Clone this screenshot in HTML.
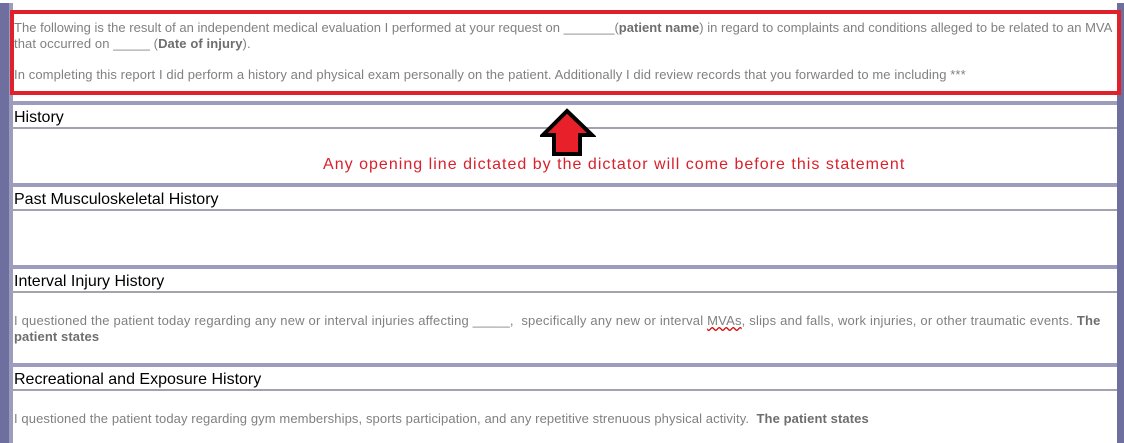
<!DOCTYPE html>
<html><head><meta charset="utf-8"><style>
body{margin:0;width:1124px;height:443px;background:#fff;position:relative;overflow:hidden;font-family:"Liberation Sans",sans-serif}
.a{position:absolute}
.band{position:absolute;left:10px;width:1107px;height:4px;background:#9c9cbf}
.ul{position:absolute;left:10px;width:1107px;height:2px;background:#a3a3b0}
.h{position:absolute;left:14px;font-size:16px;color:#000;white-space:nowrap}
.t{position:absolute;left:14px;font-size:13px;letter-spacing:0.1px;color:#808080;white-space:nowrap}
.t b{color:#6e6e6e}
</style></head><body>
<div class="a" style="left:0;top:3px;width:9px;height:440px;background:#6f6f9f"></div>
<div class="a" style="left:9px;top:3px;width:4px;height:440px;background:#9c9cbf"></div>
<div class="a" style="left:1117px;top:3px;width:7px;height:440px;background:#6f6f9f"></div>
<div class="a" style="left:10px;top:10px;width:1103px;height:77px;border:4px solid #e0202b"></div>
<div class="t" style="top:20px;letter-spacing:0.02px">The following is the result of an independent medical evaluation I performed at your request on _______(<b>patient name</b>) in regard to complaints and conditions alleged to be related to an MVA</div>
<div class="t" style="top:36px">that occurred on _____ (<b>Date of injury</b>).</div>
<div class="t" style="top:67px">In completing this report I did perform a history and physical exam personally on the patient. Additionally I did review records that you forwarded to me including ***</div>
<div class="band" style="top:101px"></div>
<div class="h" style="top:109px">History</div>
<div class="ul" style="top:127px"></div>
<div class="a" style="left:323px;top:156px;font-size:16px;color:#d8212c;white-space:nowrap;letter-spacing:1.02px">Any opening line dictated by the dictator will come before this statement</div>
<svg class="a" style="left:540px;top:108px" width="56" height="50" viewBox="0 0 56 50"><polygon points="27,3 52,27 40,27 40,46 14,46 14,27 3,27" fill="#e8202a" stroke="#000" stroke-width="4" stroke-linejoin="miter"/></svg>
<div class="band" style="top:183px"></div>
<div class="h" style="top:191px">Past Musculoskeletal History</div>
<div class="ul" style="top:209px"></div>
<div class="band" style="top:265px"></div>
<div class="h" style="top:273px">Interval Injury History</div>
<div class="ul" style="top:291px"></div>
<div class="t" style="top:313px;letter-spacing:0.2px">I questioned the patient today regarding any new or interval injuries affecting _____,&nbsp; specifically any new or interval <span style="text-decoration:underline wavy #d00">MVAs</span>, slips and falls, work injuries, or other traumatic events. <b>The</b></div>
<div class="t" style="top:329px"><b>patient states</b></div>
<div class="band" style="top:363px"></div>
<div class="h" style="top:371px">Recreational and Exposure History</div>
<div class="ul" style="top:389px"></div>
<div class="t" style="top:411px">I questioned the patient today regarding gym memberships, sports participation, and any repetitive strenuous physical activity.&nbsp; <b>The patient states</b></div>
</body></html>
